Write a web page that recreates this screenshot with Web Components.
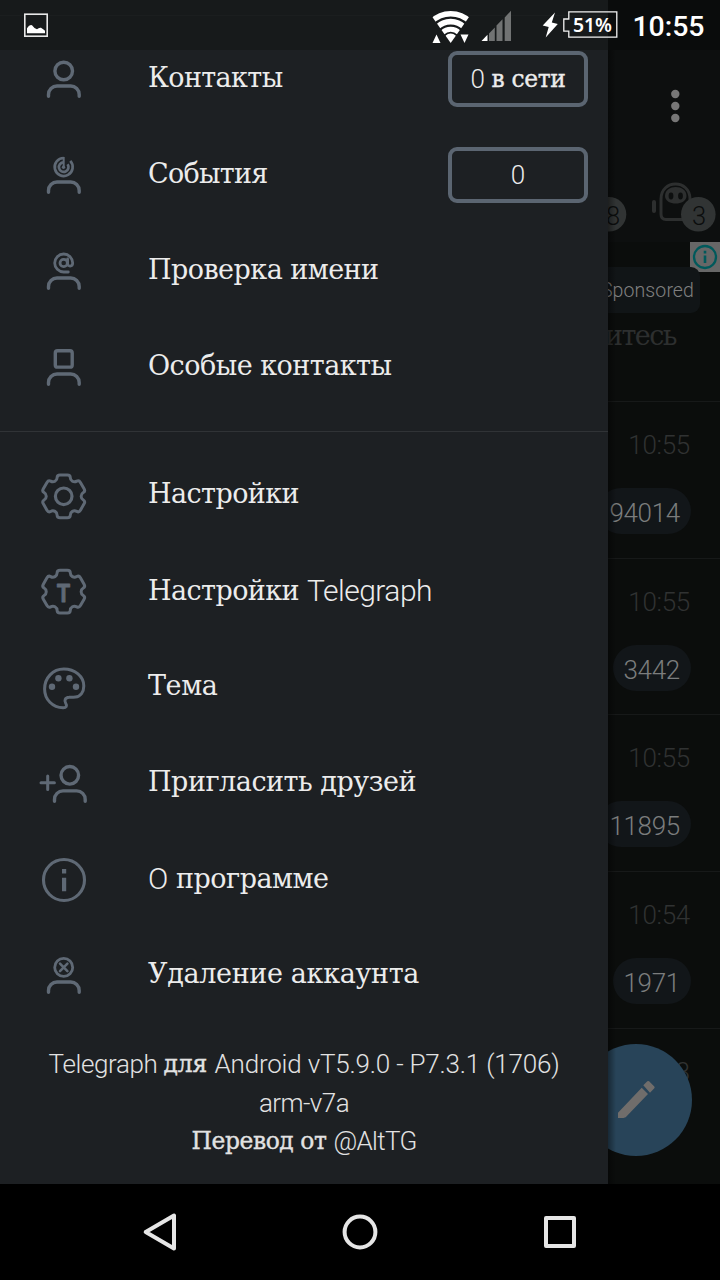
<!DOCTYPE html>
<html lang="ru">
<head>
<meta charset="utf-8">
<title>Telegraph</title>
<style>
  html, body { margin: 0; background: #000; }
  body { font-family: Roboto, "Liberation Sans", sans-serif; font-weight: 300; overflow: hidden; }
</style>
</head>
<body>
<tg-app></tg-app>
<script>
const SERIF = '"DejaVu Serif", "Liberation Serif", serif';

function define(name, html, setup) {
  const t = document.createElement('template');
  t.innerHTML = html;
  customElements.define(name, class extends HTMLElement {
    connectedCallback() {
      if (this.shadowRoot) return;
      this.attachShadow({ mode: 'open' }).append(t.content.cloneNode(true));
      if (setup) setup(this, this.shadowRoot);
    }
  });
}

/* Gear outline: six rounded teeth around a centre. */
function gearPath(cx, cy) {
  const p = [];
  for (let i = 0; i < 6; i++) {
    for (const [r, d] of [[17.6, -22], [22.4, -17], [22.4, 17], [17.6, 22]]) {
      const a = (i * 60 + d) * Math.PI / 180;
      p.push([cx + r * Math.sin(a), cy - r * Math.cos(a)]);
    }
  }
  const n = p.length, cut = 2.9;
  const toward = (a, b) => {
    const l = Math.hypot(b[0] - a[0], b[1] - a[1]), k = Math.min(cut / l, .5);
    return (a[0] + (b[0] - a[0]) * k).toFixed(2) + ' ' + (a[1] + (b[1] - a[1]) * k).toFixed(2);
  };
  return p.map((v, i) => (i ? 'L' : 'M') + toward(v, p[(i + n - 1) % n]) +
    'Q' + v[0].toFixed(2) + ' ' + v[1].toFixed(2) + ' ' + toward(v, p[(i + 1) % n])).join('') + 'Z';
}

const body = '<path d="M8.5 40.3v-1.8a8.5 8.5 0 0 1 8.5-8.5h13.7a8.5 8.5 0 0 1 8.5 8.5v1.8"/>';
const ICONS = {
  person: '<circle cx="23.7" cy="15" r="8.8"/>' + body,
  events: '<g stroke-width="2.7" stroke-linecap="butt"><path d="M23.7 6A9 9 0 1 0 30.3 8.9M23.7 10.3A4.8 4.8 0 1 0 27.6 12.3"/><path d="M23.7 5v9.5" stroke-width="2"/></g><circle cx="23.5" cy="15.2" r="1.7" fill="currentColor" stroke="none"/>' + body,
  at: '<g stroke-width="2.8"><circle cx="23.7" cy="15" r="3.7"/><path d="M27.6 11v4.8c0 3 5.1 3.2 5.1-.8a9 9 0 1 0-9 9h4.6"/></g>' + body,
  square: '<rect x="15.3" y="6.7" width="16.9" height="16.4" rx="2.2"/>' + body,
  gear: '<path stroke-width="3" d="' + gearPath(23.7, 24.3) + '"/><circle cx="23.7" cy="24.3" r="8.3" stroke-width="3.2"/>',
  gearT: '<path stroke-width="3" d="' + gearPath(23.7, 23.7) + '"/><text x="23.5" y="33.5" text-anchor="middle" font-family="Liberation Sans, sans-serif" font-weight="700" font-size="25.5" textLength="13" lengthAdjust="spacingAndGlyphs" fill="currentColor" stroke="currentColor" stroke-width="1">T</text>',
  palette: '<path stroke-width="3" d="M23.800 5C12.800 5 4.600 14 4.600 25c0 10.500 8 18.700 18.500 18.700 3.300 0 4.200-1.900 2.700-4.200C24 36.500 25 33.500 29 33.200C31 33 33 33.400 35.500 33.100C40.500 32.500 43.800 28 43.800 22C43.800 12.500 35 5 23.800 5Z"/><g fill="currentColor" stroke="none"><circle cx="18.400" cy="14.200" r="3.200"/><circle cx="29.400" cy="14.200" r="3.200"/><circle cx="12" cy="22.700" r="3.200"/><circle cx="36" cy="22.700" r="3.200"/></g>',
  invite: '<circle cx="29.800" cy="15.300" r="8.800"/><path d="M7.700 16v13.400M1 22.700h13.400" stroke-width="3"/><g transform="translate(6 .9)">' + body + '</g>',
  info: '<circle cx="24" cy="24" r="20.500" stroke-width="3.100"/><path d="M24.100 13v4.500M24.100 21.700v13.500" stroke-width="4.200" stroke-linecap="butt"/>',
  remove: '<circle cx="23.700" cy="15.400" r="9" stroke-width="2.800"/><path d="M20 11.700l7.400 7.400M27.400 11.700L20 19.100" stroke-width="2.600"/>' + body,
};

define('tg-icon', `<style>:host{display:block;width:48px;height:48px;color:#5f6975}svg{display:block;overflow:visible}</style>
<svg width="48" height="48" viewBox="0 0 48 48" fill="none" stroke="currentColor" stroke-width="3.4" stroke-linecap="round" stroke-linejoin="round"></svg>`,
  (h, r) => { r.querySelector('svg').innerHTML = ICONS[h.getAttribute('name')]; });

/* A run of text tracked to a given advance width (w); "serif" picks the Cyrillic face. */
define('tg-run', `<style>
:host{display:inline-block;white-space:pre}
:host([serif]){font-family:${SERIF};font-weight:400;font-size:var(--serif-size,.9em);transform:translateY(-1px)}
:host([strong]){-webkit-text-stroke:.35px currentColor}
</style><slot></slot>`, h => {
  const w = +h.getAttribute('w');
  if (!w) return;
  const sp = (w - h.getBoundingClientRect().width) / h.textContent.length;
  h.style.letterSpacing = sp.toFixed(3) + 'px';
});

define('tg-item', `<style>
:host{display:grid;grid-template-columns:108px 1fr auto;align-items:center;height:96px;padding:0 20px 0 40px;box-sizing:border-box;color:#ececec;font-size:30px}
.label{display:flex;align-items:baseline;line-height:36px;padding-bottom:2px}
</style><div class="icon"></div><div class="label"><slot></slot></div><slot name="badge"></slot>`,
  (h, r) => {
    const icon = document.createElement('tg-icon');
    icon.setAttribute('name', h.getAttribute('icon'));
    r.querySelector('.icon').append(icon);
  });

define('tg-count', `<style>
:host{display:block;box-sizing:border-box;width:140px;height:56px;margin-bottom:2px;border:4px solid #5b6571;border-radius:9px;line-height:48px;font-size:26px;color:#ececec}
div{display:flex;justify-content:center;align-items:baseline}
</style><div><slot></slot></div>`);

define('tg-drawer', `<style>
:host{display:block;box-sizing:border-box;height:1184px;padding-top:32px;background:#1d2023;overflow:hidden}
hr{border:0;height:1px;background:#303336;margin:15px 0 16px}
footer{display:flex;flex-direction:column;align-items:center;padding-top:21px;font-size:26px;color:#e2e2e2}
footer div{display:flex;align-items:baseline;height:38.500px;line-height:38px}
</style>
<tg-item icon="person"><tg-run serif w="134.500">Контакты</tg-run><tg-count slot="badge"><tg-run w="21">0 </tg-run><tg-run serif strong w="74">в сети</tg-run></tg-count></tg-item>
<tg-item icon="events"><tg-run serif w="119.500">События</tg-run><tg-count slot="badge">0</tg-count></tg-item>
<tg-item icon="at"><tg-run serif w="230.500">Проверка имени</tg-run></tg-item>
<tg-item icon="square"><tg-run serif w="243.500">Особые контакты</tg-run></tg-item>
<hr>
<tg-item icon="gear"><tg-run serif w="151">Настройки</tg-run></tg-item>
<tg-item icon="gearT"><tg-run serif w="159">Настройки </tg-run><tg-run w="125">Telegraph</tg-run></tg-item>
<tg-item icon="palette"><tg-run serif w="69.500">Тема</tg-run></tg-item>
<tg-item icon="invite"><tg-run serif w="268">Пригласить друзей</tg-run></tg-item>
<tg-item icon="info"><tg-run w="28">О </tg-run><tg-run serif w="152.500">программе</tg-run></tg-item>
<tg-item icon="remove"><tg-run serif w="271">Удаление аккаунта</tg-run></tg-item>
<footer>
<div><tg-run w="115">Telegraph </tg-run><tg-run serif strong w="51">для </tg-run><tg-run w="345">Android vT5.9.0 - P7.3.1 (1706)</tg-run></div>
<div><tg-run w="90">arm-v7a</tg-run></div>
<div><tg-run serif strong w="142">Перевод от </tg-run><tg-run w="83">@AltTG</tg-run></div>
</footer>`);

define('tg-chat', `<style>
:host{display:flex;flex-direction:column;align-items:flex-end;box-sizing:border-box;height:156.700px;padding:28px 29px 0 0;border-top:1px solid #171919;font-size:26px;letter-spacing:-.3px;line-height:30px}
time{color:#303232;padding-right:1px}
b{font-weight:300;color:#7b7d7d;background:#121619;height:46px;line-height:50px;border-radius:23px;padding:0 11px;margin-top:28px}
</style><time></time><b></b>`, (h, r) => {
  r.querySelector('time').textContent = h.getAttribute('time');
  r.querySelector('b').textContent = h.getAttribute('count');
});

define('tg-chats', `<style>
:host{position:relative;display:flex;flex-direction:column;box-sizing:border-box;height:1184px;background:#0b0d0c;overflow:hidden}
:host>*{flex:none}
svg{display:block}
header{height:242px;background:#0d0f0f}
.ad{height:159px;display:flex;flex-direction:column;align-items:flex-end}
.choices{width:30px;height:30px;background:#676767}
.sponsor{height:46px;margin:-5px 20px 0 0;padding:0 6px 0 80px;border-radius:9px;background:#111517;color:#808080;font:300 19.500px/47px Roboto,sans-serif;letter-spacing:.1px}
.hint{color:#2d2f2f;font-size:30px;margin:7px 44px 0 0;line-height:32px}
.last{height:156px;border-top:1px solid #171919;box-sizing:border-box;padding:28px 30px 0 0;text-align:right;font-size:26px;line-height:30px;color:#303232}
.fab{position:absolute;left:-28px;top:1044px}
.shade{position:absolute;left:0;top:50px;bottom:0;width:8px;background:linear-gradient(90deg,#0006,#0000)}
</style>
<header><svg width="112" height="242" viewBox="608 0 112 242">
<g fill="#777"><circle cx="675.300" cy="94" r="4.200"/><circle cx="675.300" cy="106" r="4.200"/><circle cx="675.300" cy="118" r="4.200"/></g>
<path d="M661 214v-15c0-20 29-20 29 0v15q0 5.500-5 5.500h-19q-5 0-5-5.500z" fill="none" stroke="#2d2f2f" stroke-width="3"/>
<path d="M654 202v9" stroke="#2d2f2f" stroke-width="4" stroke-linecap="round"/>
<path d="M665 196c0-12 21.500-12 21.500 0 0 10-21.500 10-21.500 0z" fill="#2d2f2f"/>
<ellipse cx="671" cy="196" rx="2.400" ry="3.400" fill="#0d0f0f"/><ellipse cx="680.500" cy="196" rx="2.400" ry="3.400" fill="#0d0f0f"/>
<circle cx="609" cy="214.300" r="17.300" fill="#313434"/><circle cx="698.300" cy="214.300" r="17.300" fill="#313434"/>
<g font-family="Roboto, sans-serif" font-size="25.500" font-weight="300" fill="#0b0d0d" text-anchor="middle"><text x="613" y="225.300">8</text><text x="699" y="225.300">3</text></g>
</svg></header>
<div class="ad">
<svg class="choices" width="30" height="30" viewBox="0 0 30 30" fill="none" stroke="#00595b"><circle cx="15" cy="15" r="11" stroke-width="2.300"/><path d="M15 8.800v2.800M15 13.500v7.500" stroke-width="2.600"/></svg>
<div class="sponsor">Sponsored</div>
<div class="hint"><tg-run serif w="71">итесь</tg-run></div>
</div>
<tg-chat time="10:55" count="94014"></tg-chat>
<tg-chat time="10:55" count="3442"></tg-chat>
<tg-chat time="10:55" count="11895"></tg-chat>
<tg-chat time="10:54" count="1971"></tg-chat>
<div class="last">8</div>
<svg class="fab" width="112" height="112" viewBox="0 0 112 112"><circle cx="56" cy="56" r="56" fill="#284459"/><path d="M38 68.700L61.700 43.700L68 50L45.700 73.300L43.500 74H38zM63.300 41.300l4-4q.9-.8 1.800 0l5.200 5.200q.8.900 0 1.800l-4.300 4.400z" fill="#706d6b"/></svg>
<div class="shade"></div>`);

define('tg-status', `<style>
:host{position:absolute;inset:0 0 auto 0;height:50px;display:grid;grid-template-columns:608px 112px}
.l{background:#171a1b}.r{background:#0a0c0c}
svg{position:absolute;left:0;top:0}
</style><div class="l"></div><div class="r"></div>
<svg width="720" height="50" viewBox="0 0 720 50">
<path d="M0 15.500h608" stroke="#1b1e1f" stroke-width="1"/>
<rect x="24.800" y="14.200" width="22.400" height="22" fill="none" stroke="#e8e8e8" stroke-width="1.600"/>
<path d="M27 33.300v-5q2.500-4 5-3 2.500 3.500 5 4 2-2 4-1.500 3 2 4 3v2.500z" fill="#fff"/>
<clipPath id="w"><path d="M450.700 43L426 8H475.400z"/></clipPath>
<g clip-path="url(#w)" fill="none" stroke="#fff" stroke-width="5.600"><circle cx="450.700" cy="41" r="27.200"/><circle cx="450.700" cy="41" r="19.400"/><circle cx="450.700" cy="41" r="11.800" stroke-width="5"/><circle cx="450.700" cy="40.500" r="3.500" stroke-width="7"/></g>
<path d="M432.500 43l4-8.500 4 8.500zM460.500 34.500h8l-4 8.500z" fill="#fff"/>
<path d="M489 41v-7.500l5.800-6V41zM496.500 41V25.500l6-6.200V41zM504.700 41V17.500l6.300-6.700V41z" fill="#717373"/>
<path d="M481.500 41l6-6.300V41z" fill="#fff"/>
<path d="M555 12.500L542.700 25.500l6 1.500-3 10.500L557.800 24l-6-1.500z" fill="#fff"/>
<path d="M568.800 11.800h48V37.200h-48v-6h-5V19h5z" fill="none" stroke="#f2f2f2" stroke-width="1.300"/>
<text x="573" y="31.500" font-family="Noto Sans, sans-serif" font-weight="600" font-size="20.500" fill="#fff" textLength="39" lengthAdjust="spacingAndGlyphs">51%</text>
<text x="632.500" y="36" font-family="Roboto, sans-serif" font-weight="500" font-size="28.500" fill="#fff" textLength="72">10:55</text>
</svg>`);

define('tg-nav', `<style>
:host{display:flex;justify-content:center;align-items:center;gap:152px;height:96px;background:#000}
svg{display:block;overflow:visible}
</style>
<svg width="48" height="48" fill="none" stroke="#e6e6e6" stroke-width="4" stroke-linejoin="round"><path d="M9.700 24L38 7.500V40.500z"/></svg>
<svg width="48" height="48" fill="none" stroke="#e6e6e6" stroke-width="4"><circle cx="24" cy="24" r="15.400"/></svg>
<svg width="48" height="48" fill="none" stroke="#e6e6e6" stroke-width="4" stroke-linejoin="round"><path d="M10 10h28v28H10z"/></svg>`);

define('tg-app', `<style>
:host{position:relative;display:block;width:720px;height:1280px;overflow:hidden}
main{display:grid;grid-template-columns:608px 112px}
</style><main><tg-drawer></tg-drawer><tg-chats></tg-chats></main><tg-nav></tg-nav><tg-status></tg-status>`);
</script>
</body>
</html>
